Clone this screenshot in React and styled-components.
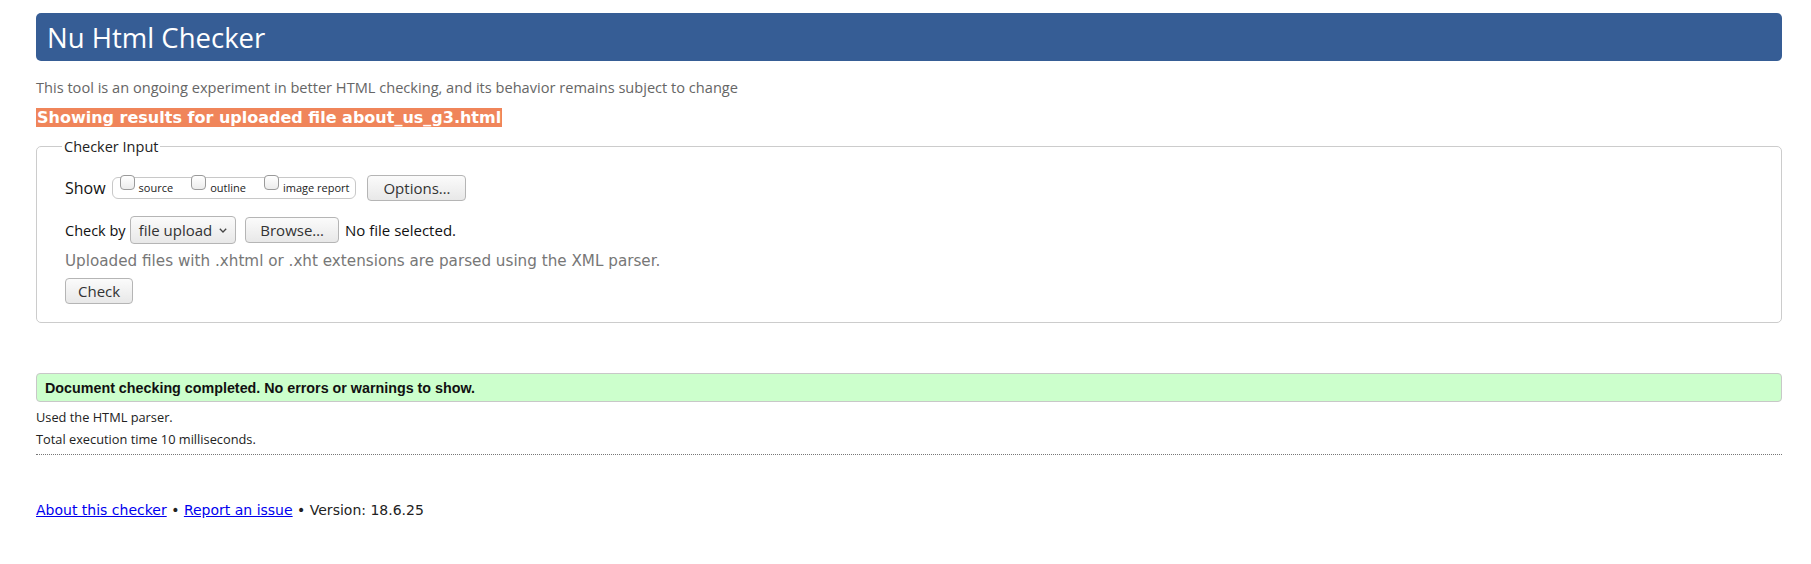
import React from 'react'
import styled, { createGlobalStyle } from 'styled-components'

const GlobalStyle = createGlobalStyle`
  html, body {
    margin: 0;
    padding: 0;
    background: #ffffff;
  }
  body {
    font-family: "Open Sans", "DejaVu Sans", sans-serif;
    color: #222222;
  }
`

const Page = styled.div`
  padding: 13px 29px 40px 36px;
`

const Banner = styled.header`
  height: 48px;
  display: flex;
  align-items: center;
  padding: 0 11px;
  background-color: #365d95;
  border-radius: 5px;
`

const Title = styled.h1`
  margin: 0;
  font-size: 27.5px;
  font-weight: 400;
  color: #ffffff;
`

const Intro = styled.p`
  margin: 16px 0 0;
  font-size: 14.6px;
  line-height: 20px;
  color: #666666;
`

const Notice = styled.div`
  width: fit-content;
  margin-top: 11px;
  padding: 0 1px;
  background-color: #f0855a;
  color: #ffffff;
  font-family: "DejaVu Sans", sans-serif;
  font-weight: bold;
  font-size: 16px;
  line-height: 19px;
`

const Fieldset = styled.fieldset`
  margin: 10px 0 0;
  padding: 0 28px 18px;
  border: 1px solid #cccccc;
  border-radius: 5px;
`

const Legend = styled.legend`
  margin-left: -3px;
  padding: 0 2px;
  font-size: 14.5px;
  line-height: 19px;
  color: #222222;
`

const Row = styled.div`
  display: flex;
  align-items: center;
  margin-top: ${p => p.$top || 0}px;
`

const Label = styled.span`
  font-size: ${p => p.$size || 15}px;
  margin-right: ${p => p.$gap || 0}px;
  color: #111111;
`

const CheckGroup = styled.div`
  display: flex;
  align-items: flex-start;
  height: 20px;
  padding: 0 6px 0 7px;
  margin-right: 11px;
  border: 1px solid #c8c8c8;
  border-radius: 6px;
`

const CheckItem = styled.label`
  display: flex;
  align-items: flex-start;
  margin-top: -3px;
  margin-right: ${p => p.$last ? 0 : 18}px;
  font-size: 11px;
  color: #222222;
`

const Box = styled.span`
  width: 13px;
  height: 13px;
  margin-right: 4px;
  border: 1px solid #9a9a9a;
  border-radius: 4px;
  background: linear-gradient(#ffffff, #ececec);
`

const BoxText = styled.span`
  margin-top: 5px;
`

const Button = styled.button`
  height: 26px;
  margin-right: ${p => p.$gap || 0}px;
  padding: 0 ${p => p.$pad || 12}px;
  font-family: "Open Sans", "DejaVu Sans", sans-serif;
  font-size: 15px;
  color: #333333;
  border: 1px solid #b5b5b5;
  border-radius: 4px;
  background: linear-gradient(#fbfbfb, #e8e8e8);
`

const Select = styled.div`
  display: flex;
  align-items: center;
  gap: 7px;
  height: 28px;
  box-sizing: border-box;
  margin-right: 9px;
  padding: 0 8px;
  font-size: 15px;
  color: #333333;
  border: 1px solid #b5b5b5;
  border-radius: 4px;
  background: linear-gradient(#fbfbfb, #e8e8e8);
`

const Hint = styled.p`
  margin: 7px 0 0;
  font-family: "DejaVu Sans", sans-serif;
  font-size: 15.2px;
  line-height: 20px;
  color: #777777;
`

const Success = styled.div`
  margin-top: 50px;
  height: 29px;
  box-sizing: border-box;
  display: flex;
  align-items: center;
  padding: 0 8px;
  background-color: #ccffcc;
  border: 1px solid #c8c8c8;
  border-radius: 4px;
  font-family: "Liberation Sans", Arial, sans-serif;
  font-weight: bold;
  font-size: 14.3px;
  color: #111111;
`

const Small = styled.p`
  margin: ${p => p.$top || 0}px 0 0;
  font-size: 12.8px;
  line-height: 22px;
  color: #222222;
`

const Rule = styled.hr`
  margin: 4px 0 0;
  border: 0;
  border-top: 1px dotted #777777;
`

const Footer = styled.p`
  margin: 45px 0 0;
  font-family: "DejaVu Sans", sans-serif;
  font-size: 14px;
  line-height: 20px;
  color: #222222;
`

const Link = styled.a`
  color: #0000ee;
  text-decoration: underline;
`

export default function App() {
  return (
    <Page>
      <GlobalStyle />
      <Banner>
        <Title>Nu Html Checker</Title>
      </Banner>
      <Intro>This tool is an ongoing experiment in better HTML checking, and its behavior remains subject to change</Intro>
      <Notice>Showing results for uploaded file about_us_g3.html</Notice>
      <Fieldset>
        <Legend>Checker Input</Legend>
        <Row $top={19}>
          <Label $size={16} $gap={6}>Show</Label>
          <CheckGroup>
            <CheckItem><Box /><BoxText>source</BoxText></CheckItem>
            <CheckItem><Box /><BoxText>outline</BoxText></CheckItem>
            <CheckItem $last><Box /><BoxText>image report</BoxText></CheckItem>
          </CheckGroup>
          <Button $pad={15}>Options…</Button>
        </Row>
        <Row $top={15}>
          <Label $size={14.5} $gap={4}>Check by</Label>
          <Select>
            file upload
            <svg width="8" height="5" viewBox="0 0 8 5">
              <path d="M0.8 0.8L4 4L7.2 0.8" fill="none" stroke="#444" strokeWidth="1.3" />
            </svg>
          </Select>
          <Button $pad={14} $gap={6}>Browse…</Button>
          <Label $size={15}>No file selected.</Label>
        </Row>
        <Hint>Uploaded files with .xhtml or .xht extensions are parsed using the XML parser.</Hint>
        <Row $top={7}>
          <Button $pad={12}>Check</Button>
        </Row>
      </Fieldset>
      <Success>Document checking completed. No errors or warnings to show.</Success>
      <Small $top={4}>Used the HTML parser.</Small>
      <Small>Total execution time 10 milliseconds.</Small>
      <Rule />
      <Footer>
        <Link href="#">About this checker</Link> • <Link href="#">Report an issue</Link> • Version: 18.6.25
      </Footer>
    </Page>
  )
}
